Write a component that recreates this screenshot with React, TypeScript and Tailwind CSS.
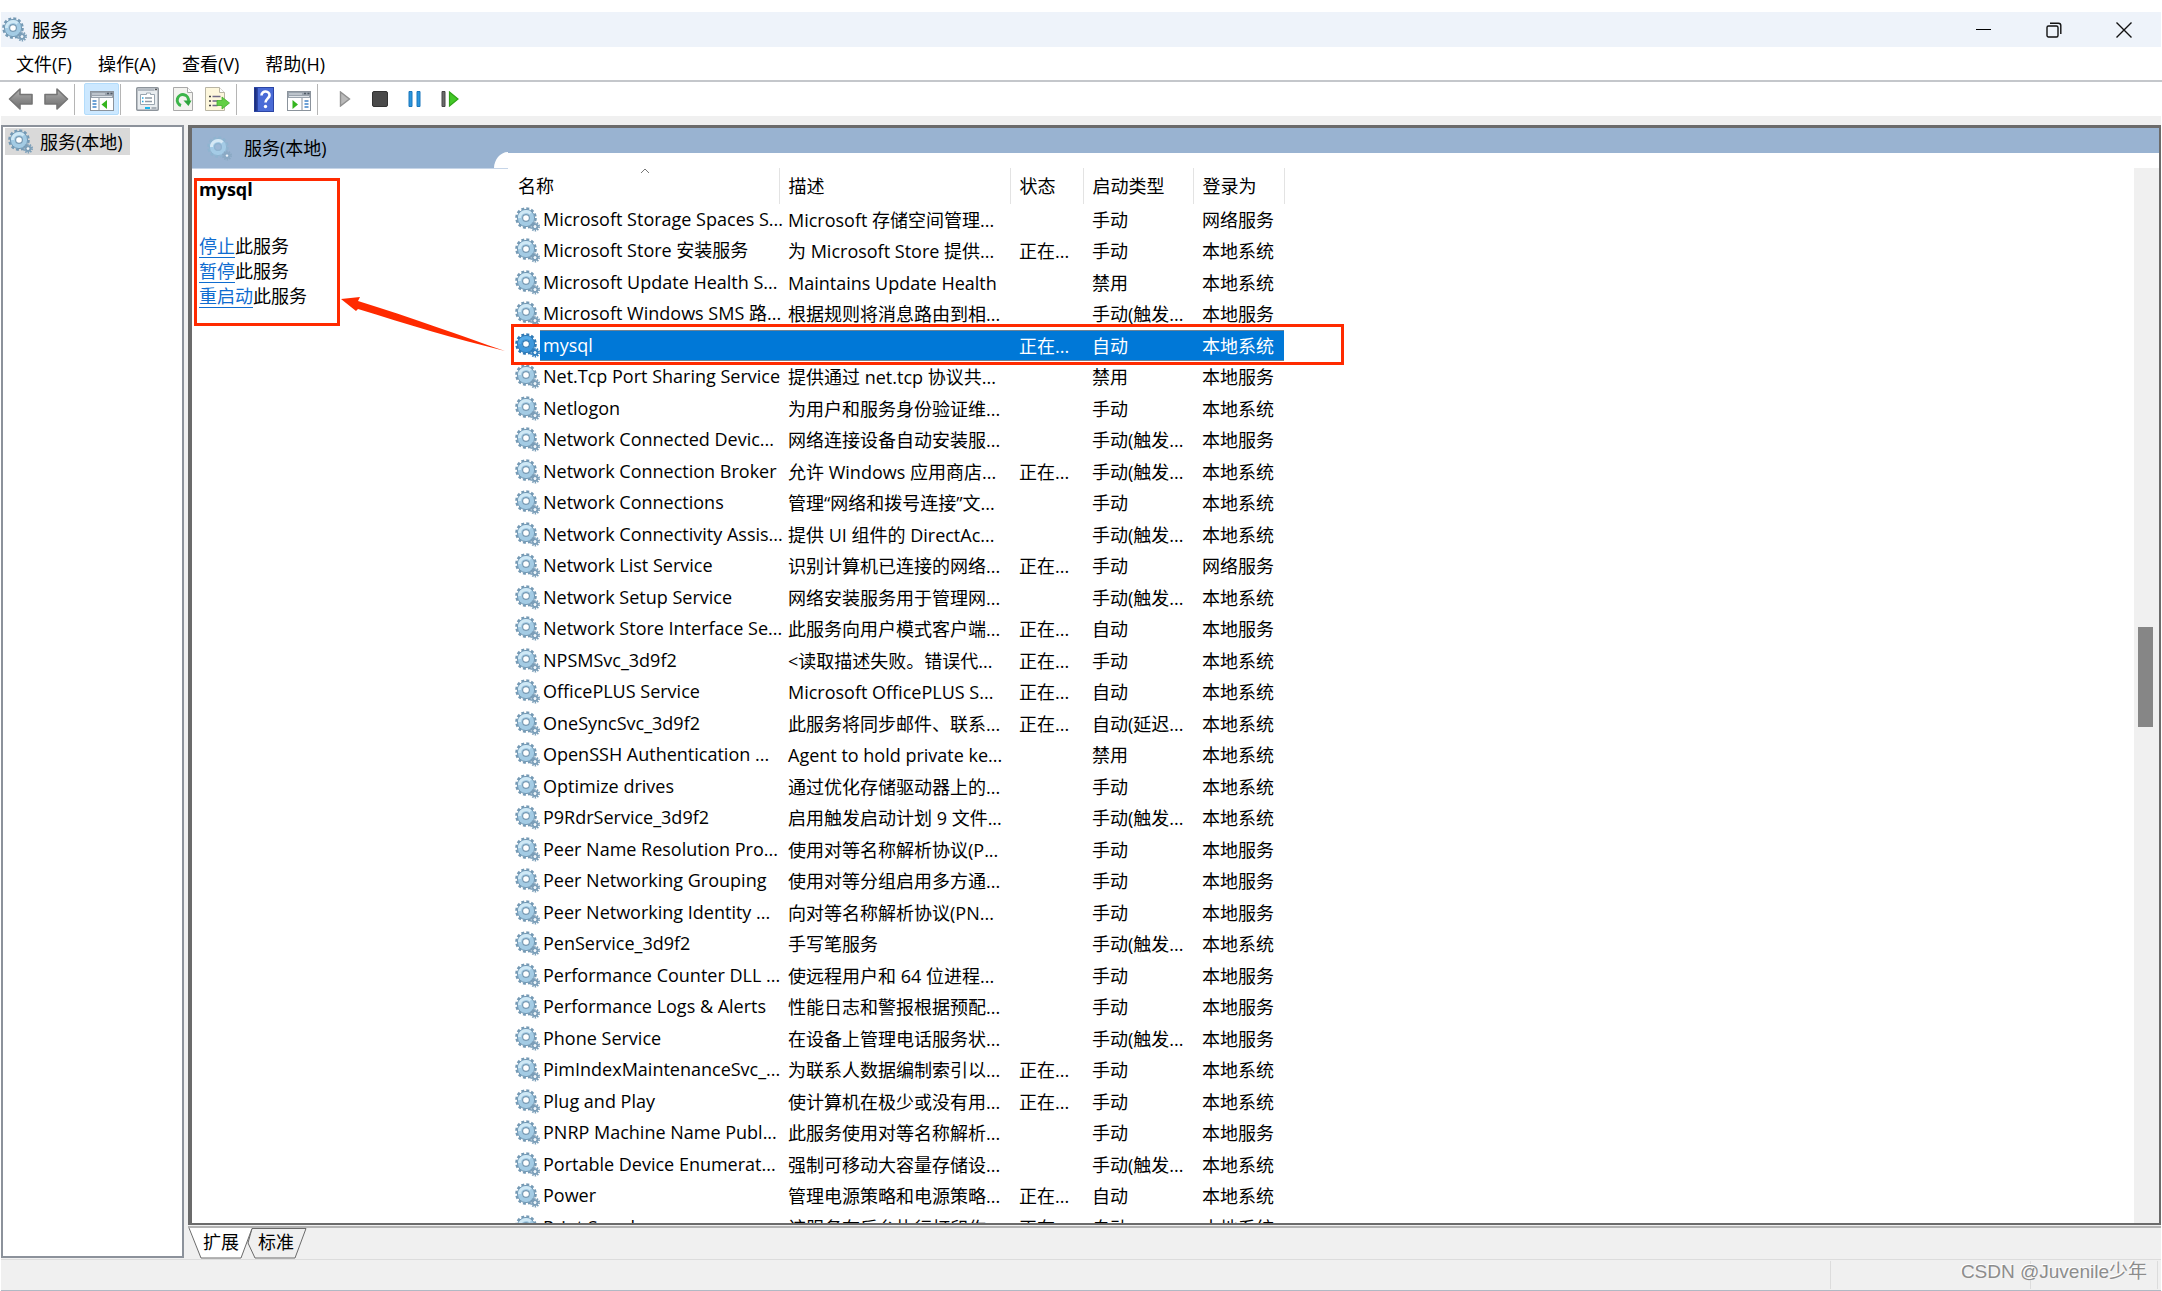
import type { ReactNode } from 'react';
import clsx from 'clsx';

type Service = {
  name: string;
  desc?: string;
  status?: string;
  startup: string;
  logon: string;
};

const RUN = '正在...';
const MANUAL = '手动';
const TRIGGER = '手动(触发...';
const AUTO = '自动';
const DISABLED = '禁用';
const SYS = '本地系统';
const LOCAL = '本地服务';
const NET = '网络服务';

const services: Service[] = [
  { name: 'Microsoft Storage Spaces S...', desc: 'Microsoft 存储空间管理...', startup: MANUAL, logon: NET },
  { name: 'Microsoft Store 安装服务', desc: '为 Microsoft Store 提供...', status: RUN, startup: MANUAL, logon: SYS },
  { name: 'Microsoft Update Health S...', desc: 'Maintains Update Health', startup: DISABLED, logon: SYS },
  { name: 'Microsoft Windows SMS 路...', desc: '根据规则将消息路由到相...', startup: TRIGGER, logon: LOCAL },
  { name: 'mysql', status: RUN, startup: AUTO, logon: SYS },
  { name: 'Net.Tcp Port Sharing Service', desc: '提供通过 net.tcp 协议共...', startup: DISABLED, logon: LOCAL },
  { name: 'Netlogon', desc: '为用户和服务身份验证维...', startup: MANUAL, logon: SYS },
  { name: 'Network Connected Devic...', desc: '网络连接设备自动安装服...', startup: TRIGGER, logon: LOCAL },
  { name: 'Network Connection Broker', desc: '允许 Windows 应用商店...', status: RUN, startup: TRIGGER, logon: SYS },
  { name: 'Network Connections', desc: '管理“网络和拨号连接”文...', startup: MANUAL, logon: SYS },
  { name: 'Network Connectivity Assis...', desc: '提供 UI 组件的 DirectAc...', startup: TRIGGER, logon: SYS },
  { name: 'Network List Service', desc: '识别计算机已连接的网络...', status: RUN, startup: MANUAL, logon: NET },
  { name: 'Network Setup Service', desc: '网络安装服务用于管理网...', startup: TRIGGER, logon: SYS },
  { name: 'Network Store Interface Se...', desc: '此服务向用户模式客户端...', status: RUN, startup: AUTO, logon: LOCAL },
  { name: 'NPSMSvc_3d9f2', desc: '<读取描述失败。错误代...', status: RUN, startup: MANUAL, logon: SYS },
  { name: 'OfficePLUS Service', desc: 'Microsoft OfficePLUS S...', status: RUN, startup: AUTO, logon: SYS },
  { name: 'OneSyncSvc_3d9f2', desc: '此服务将同步邮件、联系...', status: RUN, startup: '自动(延迟...', logon: SYS },
  { name: 'OpenSSH Authentication ...', desc: 'Agent to hold private ke...', startup: DISABLED, logon: SYS },
  { name: 'Optimize drives', desc: '通过优化存储驱动器上的...', startup: MANUAL, logon: SYS },
  { name: 'P9RdrService_3d9f2', desc: '启用触发启动计划 9 文件...', startup: TRIGGER, logon: SYS },
  { name: 'Peer Name Resolution Pro...', desc: '使用对等名称解析协议(P...', startup: MANUAL, logon: LOCAL },
  { name: 'Peer Networking Grouping', desc: '使用对等分组启用多方通...', startup: MANUAL, logon: LOCAL },
  { name: 'Peer Networking Identity ...', desc: '向对等名称解析协议(PN...', startup: MANUAL, logon: LOCAL },
  { name: 'PenService_3d9f2', desc: '手写笔服务', startup: TRIGGER, logon: SYS },
  { name: 'Performance Counter DLL ...', desc: '使远程用户和 64 位进程...', startup: MANUAL, logon: LOCAL },
  { name: 'Performance Logs & Alerts', desc: '性能日志和警报根据预配...', startup: MANUAL, logon: LOCAL },
  { name: 'Phone Service', desc: '在设备上管理电话服务状...', startup: TRIGGER, logon: LOCAL },
  { name: 'PimIndexMaintenanceSvc_...', desc: '为联系人数据编制索引以...', status: RUN, startup: MANUAL, logon: SYS },
  { name: 'Plug and Play', desc: '使计算机在极少或没有用...', status: RUN, startup: MANUAL, logon: SYS },
  { name: 'PNRP Machine Name Publ...', desc: '此服务使用对等名称解析...', startup: MANUAL, logon: LOCAL },
  { name: 'Portable Device Enumerat...', desc: '强制可移动大容量存储设...', startup: TRIGGER, logon: SYS },
  { name: 'Power', desc: '管理电源策略和电源策略...', status: RUN, startup: AUTO, logon: SYS },
  { name: 'Print Spooler', desc: '该服务在后台执行打印作...', status: RUN, startup: AUTO, logon: SYS },
];

function Gear({ variant = 'light' }: { variant?: 'light' | 'active' | 'pale' }) {
  const colors = {
    light: { edge: '#7499b4', body: '#a3cbe4', shine: '#cfe8f5', hole: '#ffffff', small: '#7c9fb9' },
    active: { edge: '#2f79b5', body: '#3f98dc', shine: '#57aae6', hole: '#ffffff', small: '#2f7fc0' },
    pale: { edge: '#8fb4d0', body: '#a4cbe6', shine: '#d6e9f5', hole: '#9db8d6', small: '#8aa9c4' },
  }[variant];
  return (
    <svg viewBox="0 0 25 25" className="w-[25px] h-[25px] shrink-0" aria-hidden="true">
      <circle cx="11" cy="11" r="9.2" fill="none" stroke={colors.edge} strokeWidth="3.2" strokeDasharray="2.8 2.017" />
      <circle cx="11" cy="11" r="6.3" fill="none" stroke={colors.body} strokeWidth="5" />
      <circle cx="11" cy="11" r="8.6" fill="none" stroke={colors.edge} strokeWidth="1" />
      <path d="M4.5 11a6.5 6.5 0 0 1 11-4.7" fill="none" stroke={colors.shine} strokeWidth="3" />
      <circle cx="11" cy="11" r="3.4" fill={colors.hole} stroke={colors.edge} strokeWidth="1.2" />
      <circle cx="20" cy="19.6" r="4" fill="none" stroke={colors.small} strokeWidth="2" strokeDasharray="1.4 1.113" />
      <circle cx="20" cy="19.6" r="2.4" fill="none" stroke={colors.small} strokeWidth="2" />
      <circle cx="20" cy="19.6" r="1.2" fill="#eef6fb" />
    </svg>
  );
}

function Arrow({ flip = false }: { flip?: boolean }) {
  return (
    <svg viewBox="0 0 26 24" className={clsx('w-[26px] h-6', flip && '-scale-x-100')} aria-hidden="true">
      <defs>
        <linearGradient id="arrowFill" x1="0" y1="0" x2="0" y2="1">
          <stop offset="0" stopColor="#b4b4b4" />
          <stop offset="0.5" stopColor="#8c8c8c" />
          <stop offset="1" stopColor="#6e6e6e" />
        </linearGradient>
      </defs>
      <path d="M1.5 12 12 2v5.5h12v9.5H12V22z" fill="url(#arrowFill)" stroke="#757575" strokeWidth="1.6" strokeLinejoin="round" />
    </svg>
  );
}

function ConsoleTree({ mirrored = false }: { mirrored?: boolean }) {
  return (
    <svg viewBox="0 0 24 20" className="w-6 h-5 mt-1" aria-hidden="true">
      <rect x="0.5" y="0.5" width="23" height="19" fill="#fff" stroke="#8b939c" />
      <rect x="1" y="1" width="22" height="6" fill="#9aa3ad" />
      <path d="M2 3h13M2 5.5h20" stroke="#dfe4e9" strokeWidth="1" />
      <path d="M17 2.5h2M20.5 2.5h2" stroke="#4f5a66" strokeWidth="1.5" />
      {mirrored ? (
        <>
          <path d="M15 7v12" stroke="#8b939c" />
          <path d="M17.5 10h4M17.5 13h4M17.5 16h4" stroke="#3f83c8" strokeWidth="1.6" />
          <path d="M5.5 9v9l5.5-4.5z" fill="#35b51f" />
        </>
      ) : (
        <>
          <path d="M9 7v12" stroke="#8b939c" />
          <path d="M2.5 10h4M2.5 13h4M2.5 16h4" stroke="#3f83c8" strokeWidth="1.6" />
          <path d="M17 9v9l-5.5-4.5z" fill="#35b51f" />
        </>
      )}
    </svg>
  );
}

function Properties() {
  return (
    <svg viewBox="0 0 23 24" className="w-[23px] h-6" aria-hidden="true">
      <rect x="0.75" y="0.75" width="21.5" height="22.5" rx="1" fill="#e9edf0" stroke="#8d949b" strokeWidth="1.5" />
      <path d="M1.5 3h17" stroke="#b4bbc2" strokeWidth="2" />
      <path d="M19 2.5h2" stroke="#555" strokeWidth="1.5" />
      <path d="M4.5 17.5v-10h6V6h4v1.5h4v10z" fill="#fff" stroke="#9aa6b0" />
      <path d="M9 11h7M9 14.5h7" stroke="#8f9aa5" strokeWidth="1.3" />
      <path d="M6 11h1.5M6 14.5h1.5" stroke="#24a5e0" strokeWidth="1.5" />
      <path d="M9 21h5" stroke="#18b4ec" strokeWidth="2" />
      <path d="M15.5 21h5" stroke="#a9b1b9" strokeWidth="2" />
    </svg>
  );
}

function Refresh() {
  return (
    <svg viewBox="0 0 20 24" className="w-5 h-6" aria-hidden="true">
      <path d="M.5.5h14l5 5v18H.5z" fill="#f3f3ef" stroke="#a9a9a9" />
      <path d="M14.5.5v5h5" fill="#fff" stroke="#a9a9a9" />
      <path d="M8 18.5A5.6 5.6 0 1 1 15.4 14" fill="none" stroke="#3cb54a" strokeWidth="3" />
      <path d="M10.5 13.5h8l-3 5.5z" fill="#2ea53c" />
    </svg>
  );
}

function ExportList() {
  return (
    <svg viewBox="0 0 25 24" className="w-[25px] h-6" aria-hidden="true">
      <path d="M.5.5h14l5 5v18H.5z" fill="#fdf7dc" stroke="#b9b5a4" />
      <path d="M14.5.5v5h5" fill="#fff" stroke="#b9b5a4" />
      <path d="M4 9.5h2M4 14h2M4 18.5h2" stroke="#444" strokeWidth="1.6" />
      <path d="M7.5 9.5h8M7.5 14h5M7.5 18.5h5" stroke="#6f6a86" strokeWidth="1.4" />
      <path d="M12 13.5h5V10l7.5 6-7.5 6v-3.5h-5z" fill="#62cf45" stroke="#44ad2e" strokeWidth="0.8" />
    </svg>
  );
}

function Help() {
  return (
    <svg viewBox="0 0 20 25" className="w-5 h-[25px]" aria-hidden="true">
      <rect width="20" height="25" fill="#2b45a5" />
      <rect x="4" y="1" width="15" height="23" fill="#4a6bd6" />
      <path d="M1.5 1v23" stroke="#1d2f7d" strokeWidth="2" />
      <path d="M7.5 8.5c0-5.5 8.5-5 8 0-.3 3-4 3.5-4 7" fill="none" stroke="#fff" strokeWidth="2.6" />
      <circle cx="11.5" cy="19.5" r="1.7" fill="#fff" />
    </svg>
  );
}

function Play() {
  return (
    <svg viewBox="0 0 12 16" className="w-3 h-4" aria-hidden="true">
      <path d="M1.5 1v14L10.5 8z" fill="#b9b9b9" stroke="#8f8f8f" strokeWidth="1.4" />
    </svg>
  );
}

function Stop() {
  return (
    <svg viewBox="0 0 16 16" className="w-4 h-4" aria-hidden="true">
      <rect x="0.5" y="0.5" width="15" height="15" rx="1.5" fill="#4a4a4a" stroke="#333" />
    </svg>
  );
}

function Pause() {
  return (
    <svg viewBox="0 0 13 16" className="w-[13px] h-4" aria-hidden="true">
      <path d="M1 .5h3v15H1zM9 .5h3v15H9z" fill="#2b95dd" stroke="#1b76bb" />
    </svg>
  );
}

function Restart() {
  return (
    <svg viewBox="0 0 18 16" className="w-[18px] h-4" aria-hidden="true">
      <path d="M1 .5h3v15H1z" fill="#6a6a6a" stroke="#444" />
      <path d="M8.5 1v14L17 8z" fill="#43c827" stroke="#2fa317" strokeWidth="1.2" />
    </svg>
  );
}

function ToolButton({ label, active, children }: { label: string; active?: boolean; children: ReactNode }) {
  return (
    <button
      aria-label={label}
      className={clsx(
        'w-[35px] h-8 flex items-center justify-center',
        active && 'bg-[#cce8ff] border border-[#b3dcfb] rounded-xs'
      )}
    >
      {children}
    </button>
  );
}

function Separator() {
  return <div className="w-px h-[31px] ml-px mr-[9px] bg-[#b5b5b5]" />;
}

function TitleBar() {
  const button = 'w-[70px] h-full flex items-center justify-center';
  return (
    <header className="h-[35px] mx-px bg-[#eef3fa] flex items-center pl-px pr-[2px]">
      <Gear />
      <h1 className="flex-1 ml-[5px] text-lg leading-6">服务</h1>
      <button aria-label="最小化" className={button}>
        <svg viewBox="0 0 16 16" className="w-4 h-4">
          <path d="M0 7.5h15" stroke="#000" />
        </svg>
      </button>
      <button aria-label="还原" className={button}>
        <svg viewBox="0 0 16 16" className="w-4 h-4" fill="none" stroke="#111" strokeWidth="1.4">
          <rect x="1" y="4" width="11" height="11" rx="1.5" />
          <path d="M4 1.2h8.5a2.3 2.3 0 0 1 2.3 2.3V12" />
        </svg>
      </button>
      <button aria-label="关闭" className={button}>
        <svg viewBox="0 0 16 16" className="w-4 h-4">
          <path d="M.5.5l15 15M15.5.5l-15 15" stroke="#111" strokeWidth="1.4" />
        </svg>
      </button>
    </header>
  );
}

function Menu() {
  return (
    <nav className="h-[33px] flex items-center gap-[26px] pl-4 text-lg leading-6">
      {['文件(F)', '操作(A)', '查看(V)', '帮助(H)'].map((item) => (
        <button key={item}>{item}</button>
      ))}
    </nav>
  );
}

function Toolbar() {
  return (
    <div className="h-9 flex items-center pl-[3px] border-t-2 border-[#c4c7cb]">
      <ToolButton label="后退"><Arrow /></ToolButton>
      <ToolButton label="前进"><Arrow flip /></ToolButton>
      <Separator />
      <ToolButton label="显示/隐藏控制台树" active><ConsoleTree /></ToolButton>
      <Separator />
      <ToolButton label="属性"><Properties /></ToolButton>
      <ToolButton label="刷新"><Refresh /></ToolButton>
      <ToolButton label="导出列表"><ExportList /></ToolButton>
      <Separator />
      <ToolButton label="帮助"><Help /></ToolButton>
      <ToolButton label="显示/隐藏操作窗格"><ConsoleTree mirrored /></ToolButton>
      <Separator />
      <ToolButton label="启动服务"><Play /></ToolButton>
      <ToolButton label="停止服务"><Stop /></ToolButton>
      <ToolButton label="暂停服务"><Pause /></ToolButton>
      <ToolButton label="重启动服务"><Restart /></ToolButton>
    </div>
  );
}

function Detail() {
  return (
    <section className="w-[316px] shrink-0">
      <div className="h-[41px] bg-[#99b3d1] flex items-center pl-[15px] border-b border-[#c6d5e8]">
        <Gear variant="pale" />
        <h2 className="flex-1 ml-3 text-lg leading-6">服务(本地)</h2>
        <svg viewBox="0 0 14 16" className="w-[14px] h-4 self-end" aria-hidden="true">
          <path d="M0 16C0 8 6 0 14 0v16z" fill="#fff" />
        </svg>
      </div>
      <div className="pt-2 pl-[7px] text-lg leading-[25px]">
        <h3 className="font-bold">mysql</h3>
        <ul className="pt-8">
          {['停止', '暂停', '重启动'].map((action) => (
            <li key={action}>
              <a href="#" className="text-[#0f6cd0] underline underline-offset-4">{action}</a>此服务
            </li>
          ))}
        </ul>
      </div>
    </section>
  );
}

function ServiceTable() {
  const head = 'h-9 p-0 text-left font-normal align-middle border-r border-[#e3e3e3]';
  return (
    <table className="w-[776px] table-fixed text-lg leading-6">
      <colgroup>
        <col className="w-[271px]" />
        <col className="w-[231px]" />
        <col className="w-[73px]" />
        <col className="w-[110px]" />
        <col className="w-[91px]" />
      </colgroup>
      <thead>
        <tr>
          <th className={clsx(head, 'pl-[10px] relative')}>
            名称
            <svg viewBox="0 0 10 6" className="absolute top-0 left-[132px] w-[10px] h-[6px]" aria-hidden="true">
              <path d="M1 5l4-4 4 4" fill="none" stroke="#777" />
            </svg>
          </th>
          <th className={clsx(head, 'pl-[9px]')}>描述</th>
          <th className={clsx(head, 'pl-[9px]')}>状态</th>
          <th className={clsx(head, 'pl-[9px]')}>启动类型</th>
          <th className={clsx(head, 'pl-[9px]')}>登录为</th>
        </tr>
      </thead>
      <tbody>
        {services.map((s) => {
          const selected = s.name === 'mysql';
          const fill = selected && 'bg-[#0078d7] text-white shadow-[inset_0_1px_#6f8294,inset_0_-1px_#6f8294]';
          const cell = clsx('p-0 pl-[9px] align-middle whitespace-nowrap', fill);
          return (
            <tr key={s.name} className="h-8 odd:h-[31px]">
              <td className="p-0 pl-[7px] align-top whitespace-nowrap">
                <div className="flex items-center h-[31px]">
                  <Gear variant={selected ? 'active' : 'light'} />
                  <span className={clsx('flex-1 h-[31px] pl-[3px] leading-[31px]', fill)}>{s.name}</span>
                </div>
              </td>
              <td className={cell}>{s.desc}</td>
              <td className={cell}>{s.status}</td>
              <td className={cell}>{s.startup}</td>
              <td className={cell}>{s.logon}</td>
            </tr>
          );
        })}
      </tbody>
    </table>
  );
}

// Red marks drawn over the window
function Annotations() {
  return (
    <>
      <div className="absolute left-[2px] top-[50px] w-[146px] h-[148px] border-3 border-[#ff2a00]" />
      <div className="absolute left-[319px] top-[196px] w-[833px] h-[41px] border-3 border-[#ff2a00]" />
      <svg viewBox="0 0 164 54" className="absolute left-[149px] top-[169px] w-[164px] h-[54px]" aria-hidden="true">
        <path d="M0 2 19 0 17 4C70 20 120 39 164 54 115 42 65 27 17 12L15 14z" fill="#ff2a00" />
      </svg>
    </>
  );
}

function Tabs() {
  return (
    <div className="relative h-[31px] flex text-lg leading-[26px]">
      <svg viewBox="0 0 120 31" className="absolute left-0 top-0 w-[120px] h-[31px]" aria-hidden="true">
        <path d="M64 .5h54L107 30H67l-7-15z" fill="#f0f0f0" stroke="#6a6a6a" />
        <path d="M0 0h64L53 30H13z" fill="#fff" />
        <path d="M1 0l12 30h40L64 .5" fill="none" stroke="#6a6a6a" />
      </svg>
      <button className="relative ml-[15px] mb-1">扩展</button>
      <button className="relative ml-[19px] mb-1">标准</button>
    </div>
  );
}

export default function App() {
  return (
    <div className="h-screen pt-3 bg-white text-black flex flex-col overflow-hidden font-['Open_Sans','Noto_Sans_CJK_SC',sans-serif]">
      <TitleBar />
      <Menu />
      <Toolbar />

      <main className="flex-1 min-h-0 mx-px pt-[9px] flex gap-1 bg-[#f0f0f0]">
        <aside className="w-[183px] mb-px shrink-0 bg-white border-2 border-[#8c929b] pl-[2px] pt-px">
          <div className="w-[125px] h-[27px] pl-[3px] flex items-center gap-[7px] bg-[#d9d9d9] text-lg leading-6">
            <Gear />
            <span className="whitespace-nowrap">服务(本地)</span>
          </div>
        </aside>

        <div className="flex-1 min-w-0 flex flex-col">
          <div className="relative flex-1 min-h-0 flex bg-white border-t-3 border-l-4 border-r-2 border-b-2 border-[#6b6b6b]">
            <Detail />
            <section className="flex-1 min-w-0 flex flex-col">
              <div className="h-[25px] shrink-0 bg-[#99b3d1]" />
              <div className="flex-1 min-h-0 flex">
                <div className="flex-1 min-w-0 pt-[15px] overflow-hidden">
                  <ServiceTable />
                </div>
                <div className="w-[25px] mt-[15px] pl-1 bg-[#f0f0f0] flex flex-col">
                  <div className="grow-[459]" />
                  <div className="w-[15px] h-[100px] bg-[#868686]" />
                  <div className="grow-[496]" />
                </div>
              </div>
            </section>
            <Annotations />
          </div>
          <div className="h-[2px] mt-px bg-[#b4b4b4]" />
          <Tabs />
        </div>
      </main>

      <footer className="h-8 mx-px shrink-0 flex justify-end items-stretch bg-[#f0f0f0] border-t border-t-[#dcdcdc] border-b border-b-[#b0b9c4]">
        <div className="relative w-[328px] mr-[3px] my-px flex border-l border-r border-[#dcdcdc]">
          <div className="w-[200px] border-r border-[#dcdcdc]" />
          <p className="absolute right-[10px] top-0 leading-[22px] text-[19px] whitespace-nowrap text-[#8c8c8c] text-shadow-[-1px_-1px_0_#ffffff] font-['Liberation_Sans','Noto_Sans_CJK_SC',sans-serif]">
            CSDN @Juvenile少年
          </p>
        </div>
      </footer>
    </div>
  );
}
